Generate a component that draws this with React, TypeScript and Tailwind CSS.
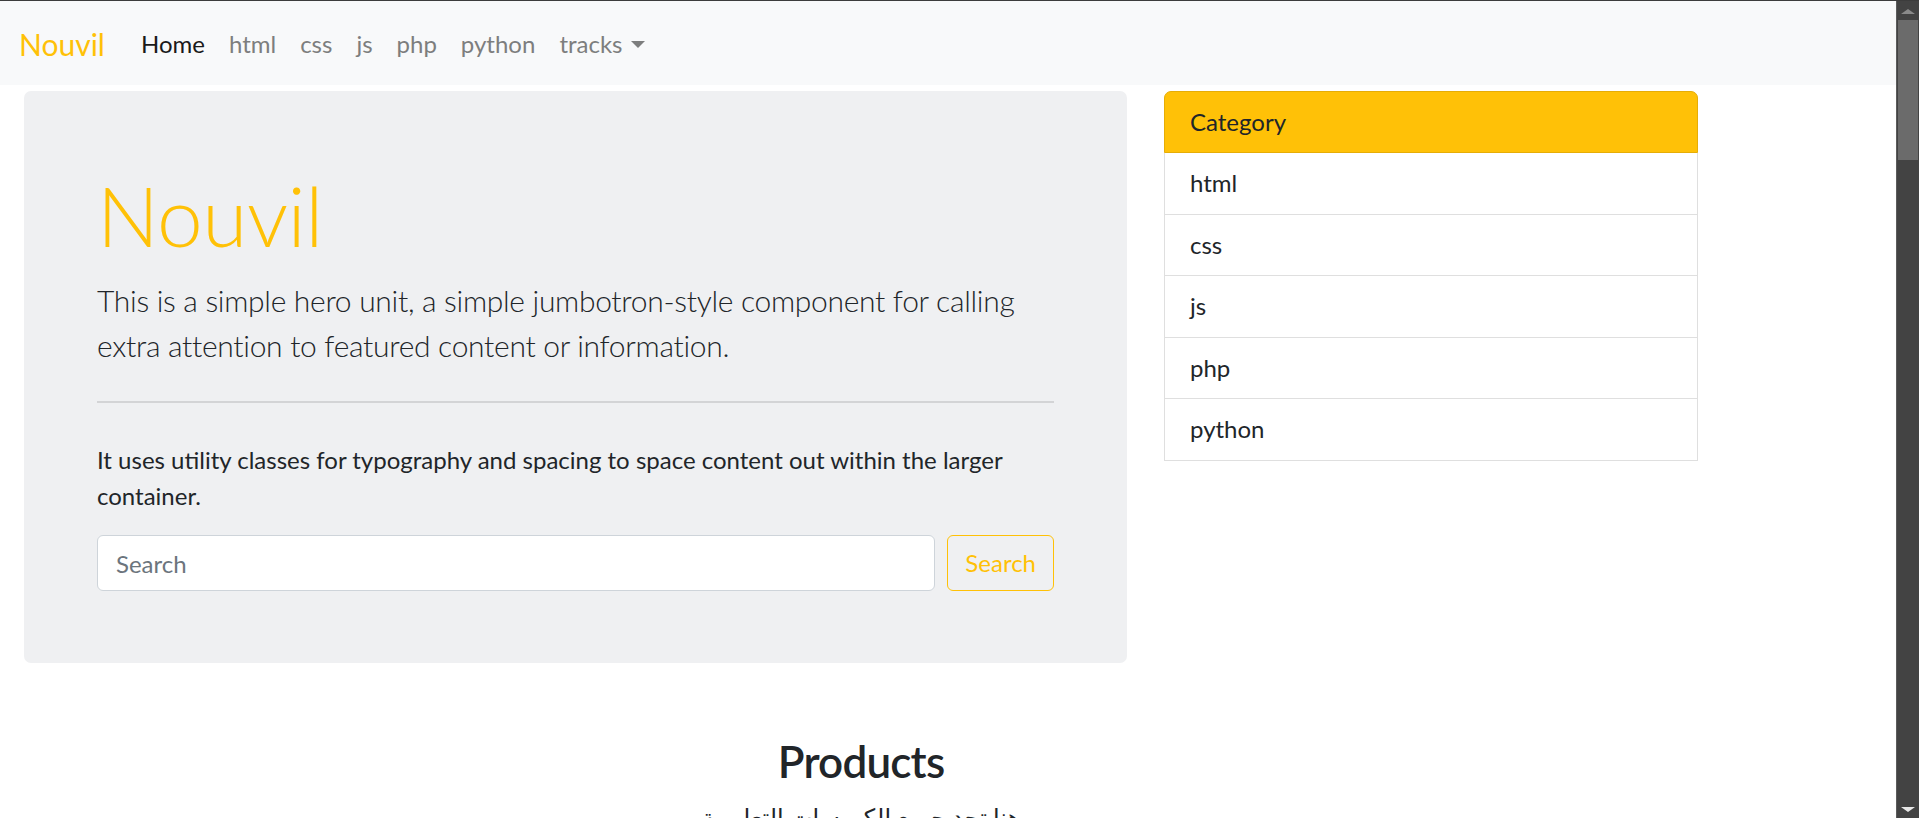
import { useState } from "react";

const navLinks = ["html", "css", "js", "php", "python"];
const categories = ["html", "css", "js", "php", "python"];

function Navbar() {
  return (
    <nav className="h-[84px] bg-[#f8f9fa] flex items-center pl-[19px] pt-[2px]">
      <a href="#" className="text-[30px] leading-[45px] text-[#ffc107] mr-[24px]">
        Nouvil
      </a>
      <ul className="flex items-center">
        <li>
          <a href="#" className="block px-[12px] text-[24px] leading-[36px] text-[#1a1a1a]">
            Home
          </a>
        </li>
        {navLinks.map((l) => (
          <li key={l}>
            <a href="#" className="block px-[12px] text-[24px] leading-[36px] text-[#7d7e7e]">
              {l}
            </a>
          </li>
        ))}
        <li>
          <a href="#" className="flex items-center px-[12px] text-[24px] leading-[36px] text-[#7d7e7e]">
            tracks
            <span className="ml-[8px] w-0 h-0 border-t-[7px] border-t-[#7d7e7e] border-x-[7px] border-x-transparent" />
          </a>
        </li>
      </ul>
    </nav>
  );
}

function Hero() {
  const [q, setQ] = useState("");
  return (
    <div className="w-[1103px] shrink-0 bg-[#eff0f2] rounded-[7px] px-[73px] pt-[74px] pb-[72px]">
      <h1 className="text-[82px] leading-[101px] font-light text-[#ffc107] mb-[12px] tracking-[-0.5px]">
        Nouvil
      </h1>
      <p className="text-[30px] leading-[45px] font-light text-[#212529] tracking-[-0.3px]">
        This is a simple hero unit, a simple jumbotron-style component for calling extra attention
        to featured content or information.
      </p>
      <hr className="mt-[33px] border-0 border-t-2 border-[#d3d4d6]" />
      <p className="mt-[39px] text-[24px] leading-[36px] text-[#212529]">
        It uses utility classes for typography and spacing to space content out within the larger
        container.
      </p>
      <form className="flex mt-[21px]" onSubmit={(e) => e.preventDefault()}>
        <input
          value={q}
          onChange={(e) => setQ(e.target.value)}
          placeholder="Search"
          className="flex-1 h-[56px] bg-white border border-[#ced4da] rounded-[6px] px-[18px] text-[24px] text-[#495057] placeholder:text-[#6c757d] outline-none"
        />
        <button className="ml-[12px] h-[56px] px-[17px] border border-[#ffc107] rounded-[6px] text-[24px] text-[#ffc107]">
          Search
        </button>
      </form>
    </div>
  );
}

function CategoryList() {
  return (
    <ul className="w-[534px] shrink-0 text-[24px] leading-[36px] text-[#212529]">
      <li className="h-[62px] flex items-center px-[25px] bg-[#ffc107] border border-[#e6ad06] rounded-t-[7px]">
        Category
      </li>
      {categories.map((c) => (
        <li
          key={c}
          className="h-[61.5px] flex items-center px-[25px] bg-white border border-t-0 border-[#dfdfdf]"
        >
          {c}
        </li>
      ))}
    </ul>
  );
}

function Scrollbar() {
  return (
    <div className="w-[23px] shrink-0 bg-[#434343] border-l border-[#5c5c5c] flex flex-col items-center">
      <span className="mt-[8px] w-0 h-0 border-b-[5px] border-b-[#8a8a8a] border-x-[7px] border-x-transparent" />
      <div className="mt-[6px] w-[20px] h-[140px] bg-[#6b6b6b]" />
      <div className="flex-1" />
      <span className="mb-[6px] w-0 h-0 border-t-[5px] border-t-[#e8e8e8] border-x-[7px] border-x-transparent" />
    </div>
  );
}

export default function App() {
  return (
    <div
      className="w-[1919px] h-[818px] overflow-hidden flex border-t border-[#3c3c3c] bg-white"
      style={{ fontFamily: '"Lato", "DejaVu Sans", sans-serif' }}
    >
      <div className="flex-1 min-w-0">
        <Navbar />
        <div className="ml-[24px] w-[1674px] pt-[6px]">
          <div className="flex items-start gap-[37px]">
            <Hero />
            <CategoryList />
          </div>
          <section className="mt-[70px] text-center">
            <h2 className="text-[44px] leading-[56px] font-semibold tracking-[-0.8px] text-[#212529] mb-[10px]">
              Products
            </h2>
            <p dir="rtl" className="text-[24px] leading-[36px] text-[#212529]">
              هنا تجد جميع الكورسات التعليمية
            </p>
          </section>
        </div>
      </div>
      <Scrollbar />
    </div>
  );
}
